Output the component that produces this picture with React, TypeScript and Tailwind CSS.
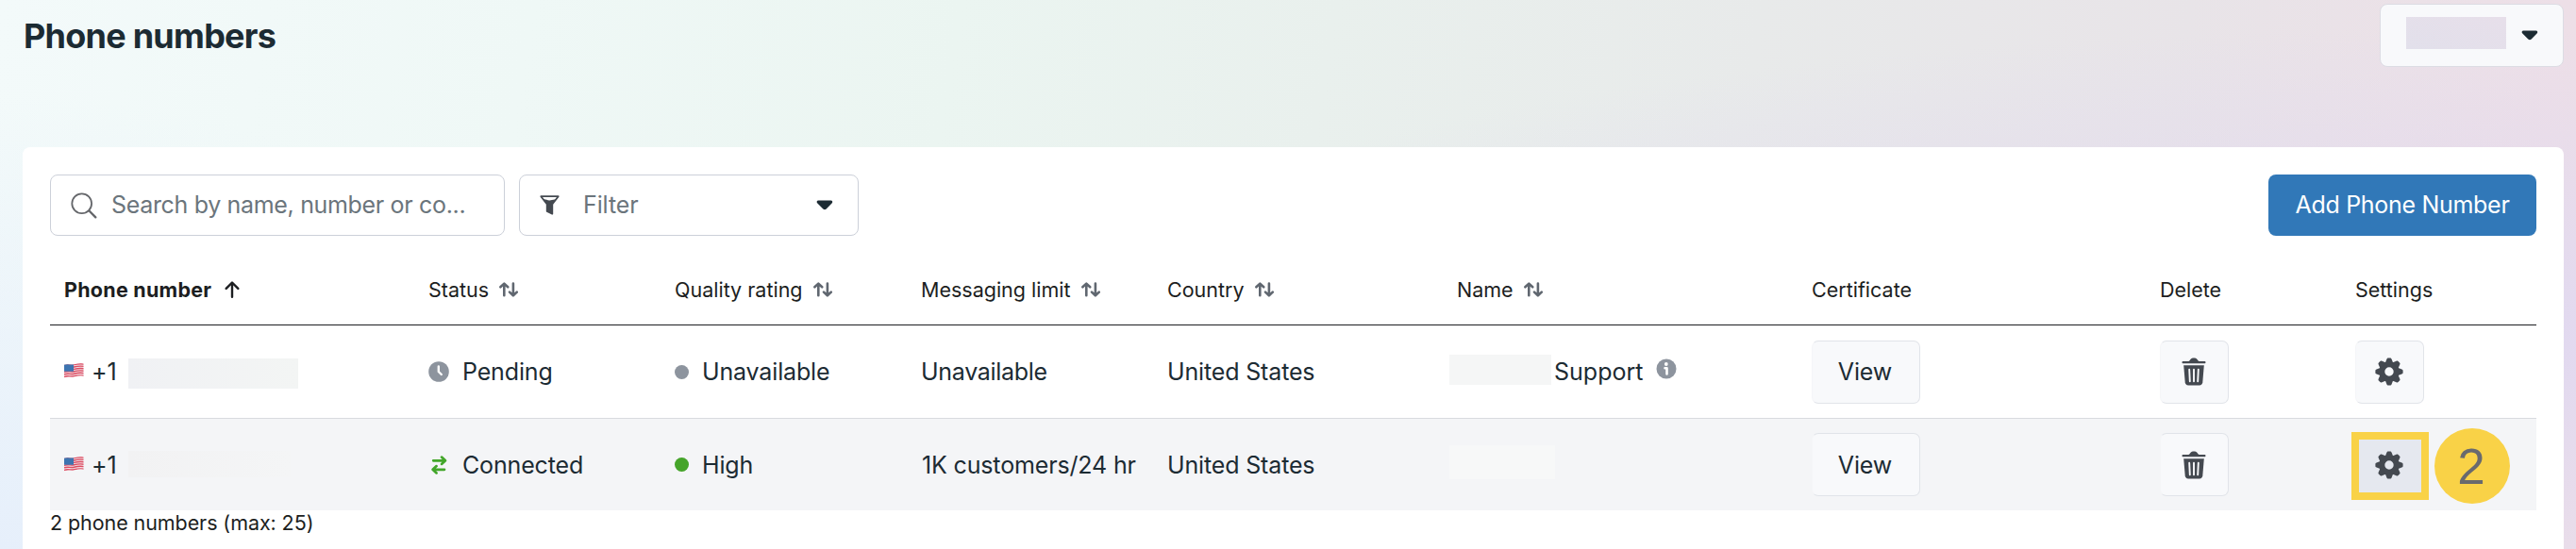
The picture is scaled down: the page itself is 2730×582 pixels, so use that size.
import type { ReactNode } from "react"

interface PhoneRow {
  status: "Pending" | "Connected"
  quality: string
  limit: string
  country: string
}

const rows: PhoneRow[] = [
  { status: "Pending", quality: "Unavailable", limit: "Unavailable", country: "United States" },
  { status: "Connected", quality: "High", limit: "1K customers/24 hr", country: "United States" },
]

const columns = "grid grid-cols-[386px_261px_261px_261px_307px_376px_369px_207px_1fr] items-center pl-[15px]"

function Caret() {
  return (
    <svg width="18" height="11" viewBox="0 0 18 11" fill="#1c2b33">
      <path d="M2.2 0.5h13.4c1.5 0 2.2 1.6 1.2 2.7l-6.1 6.3c-1 1-2.4 1-3.4 0L1.1 3.2C0 2.1.8.5 2.2.5z" />
    </svg>
  )
}

function SearchIcon() {
  return (
    <svg width="28" height="28" viewBox="0 0 28 28" fill="none" stroke="#65676b" strokeWidth="1.8" strokeLinecap="round">
      <circle cx="11.7" cy="11.7" r="10.4" />
      <path d="M19.5 19.5l6.8 6.8" strokeWidth="2.4" />
    </svg>
  )
}

function FunnelIcon() {
  return (
    <svg width="21" height="21" viewBox="0 0 21 21" fill="none" stroke="#444950" strokeWidth="1.8" strokeLinejoin="round">
      <path d="M1.3 1.2h18.4l-6.4 8.2v10.3l-5.6-2.8V9.4z" />
      <path d="M3.4 4.4c3-.6 4.6 1.3 7 1.1 2-.2 3.5-1.3 6-1.1l-3.1 5v10.3l-5.6-2.8V9.4z" fill="#444950" stroke="none" />
    </svg>
  )
}

function SortIcon() {
  return (
    <svg width="20" height="16" viewBox="0 0 20 16" fill="none" stroke="#606770" strokeWidth="2.6" strokeLinecap="round" strokeLinejoin="round">
      <path d="M5.3 14.3V2M1.4 5.3l3.9-3.7 3.9 3.7" />
      <path d="M14.9 1.5v12.3M11 10.6l3.9 3.7 3.9-3.7" />
    </svg>
  )
}

function ArrowUp() {
  return (
    <svg width="16" height="18" viewBox="0 0 16 18" fill="none" stroke="#1c1e21" strokeWidth="2.4" strokeLinecap="round" strokeLinejoin="round">
      <path d="M8 16.8v-15M1.7 7.9L8 1.5l6.3 6.4" />
    </svg>
  )
}

function Flag() {
  return (
    <svg width="21" height="16" viewBox="0 0 21 16" className="relative -top-px">
      <defs>
        <clipPath id="wave">
          <path d="M0 1.8C4 .2 7 2.200 10.500 1.300S17 0 20.500.6v13.200c-3.500-.6-6.500 0-10 .8S4 14 0 15.500z" />
        </clipPath>
      </defs>
      <g clipPath="url(#wave)">
        <rect width="21" height="16" fill="#f3e3e7" />
        <path
          d="M0 2.200c4-1.500 7 .3 10.500-.6S17 .4 21 1M0 4.600c4-1.500 7 .3 10.500-.6S17 2.800 21 3.400M0 7c4-1.500 7 .3 10.500-.6S17 5.200 21 5.800M0 9.400c4-1.500 7 .3 10.500-.6S17 7.600 21 8.200M0 11.800c4-1.500 7 .3 10.500-.6S17 10 21 10.600M0 14.400c4-1.500 7 .3 10.500-.6S17 12.600 21 13.200"
          fill="none"
          stroke="#dc4c62"
          strokeWidth="1.4"
        />
        <path d="M0 0h10v8.800H0z" fill="#3d74b0" />
      </g>
    </svg>
  )
}

function ClockIcon() {
  return (
    <svg width="22" height="22" viewBox="0 0 22 22">
      <circle cx="11" cy="11" r="10.8" fill="#8d949e" />
      <path d="M10.8 5.500v5.500l3 3" fill="none" stroke="#fff" strokeWidth="2.4" strokeLinecap="round" strokeLinejoin="round" />
    </svg>
  )
}

function SwapIcon() {
  return (
    <svg width="22" height="22" viewBox="0 0 22 22" fill="none" stroke="#42a62a" strokeWidth="2.7" strokeLinecap="round" strokeLinejoin="round">
      <path d="M5.200 6.300h12.300M14 2.600l4 3.700-4 3.600" />
      <path d="M17 15.800H5M8.600 12.100l-4 3.700 4 3.600" />
    </svg>
  )
}

function InfoIcon() {
  return (
    <svg width="22" height="22" viewBox="0 0 22 22">
      <circle cx="11" cy="11" r="10.5" fill="#8d949e" />
      <circle cx="10.8" cy="6" r="1.9" fill="#fff" />
      <path d="M9.500 10.200h2v6.300" fill="none" stroke="#fff" strokeWidth="2.6" strokeLinecap="round" strokeLinejoin="round" />
    </svg>
  )
}

function TrashIcon() {
  return (
    <svg width="26" height="30" viewBox="0 0 26 30" fill="#444950">
      <path d="M1.400 3.900h5.800c.6 0 1-.3 1.500-.9C9.600 1.500 10.600.5 12 .5h2c1.400 0 2.400 1 3.300 2.500.5.6.9.9 1.500.9h5.800c1.200 0 1.200 2.300 0 2.300H1.400c-1.200 0-1.200-2.300 0-2.300z" />
      <path d="M2.200 8.200h21.600l-1.500 18c-.2 2-1.400 3.200-3.400 3.200H7.100c-2 0-3.200-1.200-3.400-3.200z" />
      <path d="M8.200 12.800l.6 12.400M13 12.800v12.400M17.800 12.800l-.6 12.400" stroke="#f8f9fb" strokeWidth="1.9" strokeLinecap="round" />
    </svg>
  )
}

function GearIcon() {
  return (
    <svg width="30" height="30" viewBox="-15 -15 30 30" fill="#444950">
      <path
        fillRule="evenodd"
        d="M0-10.500a10.500 10.500 0 1 0 0 21a10.500 10.500 0 1 0 0-21zM0-4.700a4.700 4.700 0 1 1 0 9.400a4.700 4.700 0 1 1 0-9.400z"
      />
      {[0, 45, 90, 135, 180, 225, 270, 315].map((angle) => (
        <path key={angle} transform={`rotate(${angle})`} d="M-4.300-9l1.700-4.300c.4-1.100.9-1.300 1.600-1.300h2c.7 0 1.200.2 1.600 1.300L4.300-9z" />
      ))}
    </svg>
  )
}

function HeaderCell({ children, sortable }: { children: ReactNode; sortable?: boolean }) {
  return (
    <div className="flex items-center gap-[11px] whitespace-nowrap">
      <span>{children}</span>
      {sortable && <SortIcon />}
    </div>
  )
}

function CellButton({ children, className = "" }: { children: ReactNode; className?: string }) {
  return (
    <button className={`flex h-[67px] items-center justify-center rounded-[7px] border border-l-[#f5f6f8] border-[#e1e4e9] bg-[#f8f9fb] pr-[2px] ${className}`}>
      {children}
    </button>
  )
}

function TableRow({ row }: { row: PhoneRow }) {
  const connected = row.status === "Connected"

  return (
    <div className={`${columns} h-[98px] text-[25px] tracking-[-0.15px] text-[#1c2b33] whitespace-nowrap ${connected ? "border-t border-[#d9dbdf] bg-[#f4f5f7]" : ""}`}>
      <div className="flex items-center">
        <Flag />
        <span className="ml-2 w-[39px] pt-[2px]">+1</span>
        {connected ? (
          <span className="h-7 w-[172px] -translate-y-px bg-linear-to-r from-[#f2f2f3] to-[#f4f5f6]" />
        ) : (
          <span className="relative top-[2px] h-8 w-[180px] bg-linear-to-r from-[#f0f1f4] to-[#f3f5f4]" />
        )}
      </div>
      <div className="flex items-center gap-[14px]">
        {connected ? <SwapIcon /> : <ClockIcon />}
        <span className="pt-[2px]">{row.status}</span>
      </div>
      <div className="flex items-center gap-[14px]">
        <span className={`size-[15px] rounded-full ${connected ? "bg-[#45a42a]" : "bg-[#8d949e]"}`} />
        <span className="pt-[2px]">{row.quality}</span>
      </div>
      <div className={connected ? "pl-px pt-[2px]" : "pt-[2px] tracking-[-0.3px]"}>{row.limit}</div>
      <div className="pt-[2px]">{row.country}</div>
      <div className="-ml-2 flex items-center">
        {connected ? (
          <span className="relative -top-[3px] h-9 w-28 bg-[#f7f8f8]" />
        ) : (
          <>
            <span className="relative -top-[2px] h-8 w-[108px] bg-[#f5f6f6]" />
            <span className="ml-[3px] pt-[2px] tracking-normal">Support</span>
            <span className="relative -top-[3px] ml-[14px]">
              <InfoIcon />
            </span>
          </>
        )}
      </div>
      <div>
        <CellButton className="w-[115px]">
          <span className="pt-[2px]">View</span>
        </CellButton>
      </div>
      <div>
        <CellButton className="w-[73px]">
          <TrashIcon />
        </CellButton>
      </div>
      {connected ? (
        <div className="relative">
          <CellButton className="w-[73px]">
            <GearIcon />
          </CellButton>
          <div className="absolute -left-1 -top-px flex h-[72px] w-[82px] items-center justify-center border-8 border-[#f9d247] bg-[#e5e8ef] pb-[3px] pr-[3px]">
            <GearIcon />
          </div>
          <div className="absolute left-[84px] -top-[5px] flex size-20 items-center justify-center rounded-full bg-[#f9d247] pr-[2px] pt-px font-['Liberation_Sans',sans-serif] text-[53px] leading-none text-[#696a6e]">
            2
          </div>
        </div>
      ) : (
        <div>
          <CellButton className="w-[73px]">
            <GearIcon />
          </CellButton>
        </div>
      )}
    </div>
  )
}

export default function App() {
  return (
    <div className="h-[582px] w-[2730px] overflow-hidden bg-[radial-gradient(ellipse_700px_480px_at_0%_100%,#e6effb_0%,#e6effb00_100%),radial-gradient(ellipse_1500px_330px_at_95%_62%,#e1d9f0_0%,#e1d9f000_100%),linear-gradient(100deg,#f3fafa_0%,#eff8f6_20%,#ebf5f1_36%,#e9f0ed_50%,#e8eaea_66%,#e8e4e8_82%,#eddfe7_96%)] pl-6 pr-[13px] font-[Inter,'Liberation_Sans',sans-serif]">
      <header className="flex h-[156px] items-start justify-between">
        <h1 className="ml-px mt-[16px] text-[36px] font-bold leading-[44px] tracking-[-0.75px] text-[#1c2b33]">Phone numbers</h1>
        <button className="mt-1 flex h-[67px] w-[195px] items-center rounded-lg border border-[#dcdce3] bg-[#f8f9fb] pl-[27px]">
          <span className="mr-4 h-[34px] w-[106px] -translate-y-[3px] bg-linear-to-tr from-[#e2e0eb] to-[#e7dfea]" />
          <Caret />
        </button>
      </header>

      <main className="h-[426px] rounded-t-lg bg-white px-[29px] pt-[29px]">
        <div className="flex h-[65px] items-stretch text-[25px]">
          <div className="flex w-[482px] items-center gap-[15px] rounded-lg border border-[#ccd0d9] pl-[21px] text-[#6b757c]">
            <SearchIcon />
            <span className="pt-px tracking-[-0.33px]">Search by name, number or co...</span>
          </div>
          <div className="ml-[15px] flex w-[360px] items-center rounded-lg border border-[#ccd0d9] pl-[21px] pr-[26px] text-[#6b757c]">
            <FunnelIcon />
            <span className="ml-[25px] flex-1 pt-px tracking-[-0.1px]">Filter</span>
            <Caret />
          </div>
          <button className="ml-auto w-[284px] rounded-lg bg-[#3178b8] pt-px tracking-[-0.3px] text-white">Add Phone Number</button>
        </div>

        <div className={`${columns} h-[95px] border-b border-[#1c1e21] pt-5 text-[21.5px] text-[#1c1e21]`}>
          <div className="flex items-center gap-[14px] font-bold tracking-[0.25px]">
            <span>Phone number</span>
            <ArrowUp />
          </div>
          <HeaderCell sortable>Status</HeaderCell>
          <HeaderCell sortable>Quality rating</HeaderCell>
          <HeaderCell sortable>Messaging limit</HeaderCell>
          <HeaderCell sortable>Country</HeaderCell>
          <HeaderCell sortable>Name</HeaderCell>
          <HeaderCell>Certificate</HeaderCell>
          <HeaderCell>Delete</HeaderCell>
          <HeaderCell>Settings</HeaderCell>
        </div>

        {rows.map((row) => (
          <TableRow key={row.status} row={row} />
        ))}
        <p className="text-[21.5px] leading-[26px] tracking-[-0.08px] text-[#1c1e21]">2 phone numbers (max: 25)</p>
      </main>
    </div>
  )
}
